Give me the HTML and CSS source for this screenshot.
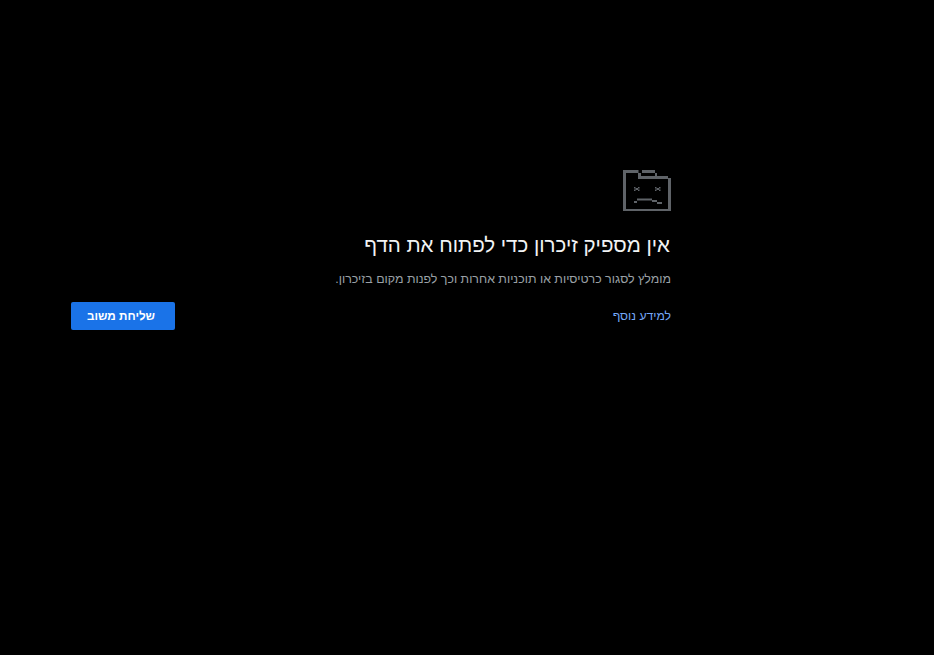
FILE: index.html
```
<!DOCTYPE html>
<html dir="rtl" lang="he">
<head>
<meta charset="utf-8">
<title>אין מספיק זיכרון</title>
<link rel="stylesheet" href="styles.css">
</head>
<body>
<main class="wrapper">
  <svg class="icon" width="48" height="42" viewBox="0 0 48 42" aria-hidden="true">
    <g fill="#5f6368">
      <rect x="0" y="4" width="3" height="38"/>
      <rect x="0" y="1" width="15.5" height="3"/>
      <rect x="15" y="4" width="3" height="6"/>
      <rect x="18" y="7" width="27" height="3"/>
      <rect x="19" y="1" width="13" height="3"/>
      <rect x="32" y="4" width="2" height="3"/>
      <rect x="45" y="9" width="3" height="33"/>
      <rect x="0" y="40" width="48" height="2"/>
      <rect x="11" y="18" width="1.5" height="1.5"/>
      <rect x="15" y="18" width="1.5" height="1.5"/>
      <rect x="12.5" y="19" width="2.5" height="2"/>
      <rect x="11" y="20.5" width="1.5" height="1.5"/>
      <rect x="15" y="20.5" width="1.5" height="1.5"/>
      <rect x="32" y="18" width="1.5" height="1.5"/>
      <rect x="36" y="18" width="1.5" height="1.5"/>
      <rect x="33.5" y="19" width="2.5" height="2"/>
      <rect x="32" y="20.5" width="1.5" height="1.5"/>
      <rect x="36" y="20.5" width="1.5" height="1.5"/>
      <rect x="11" y="32" width="3" height="2"/>
      <rect x="14" y="29.5" width="15" height="2"/>
      <rect x="29" y="31" width="5" height="2"/>
      <rect x="34" y="33" width="5" height="2"/>
    </g>
  </svg>
  <h1 class="title">אין מספיק זיכרון כדי לפתוח את הדף</h1>
  <p class="message">מומלץ לסגור כרטיסיות או תוכניות אחרות וכך לפנות מקום בזיכרון.</p>
  <div class="actions">
    <a class="link" href="#">למידע נוסף</a>
    <button class="send" type="button">שליחת משוב</button>
  </div>
</main>
</body>
</html>
```
FILE: styles.css
```
html, body {
  margin: 0;
  height: 100%;
  background: #000;
}
body {
  font-family: "Liberation Sans", Arial, sans-serif;
  font-size: 13px;
  color: #9aa0a6;
}
.wrapper {
  box-sizing: border-box;
  width: 600px;
  margin-right: 263px;
  padding-top: 169px;
}
.icon {
  display: block;
}
.title {
  margin: 20px 0 0;
  padding-right: 1px;
  font-size: 20.5px;
  line-height: 28px;
  font-weight: 400;
  color: #f1f3f4;
}
.message {
  margin: 10px 0 0;
  font-size: 12.4px;
  line-height: 20px;
}
.actions {
  display: flex;
  justify-content: space-between;
  align-items: center;
  margin-top: 13px;
}
.link {
  font-size: 12.2px;
  color: #74a7f7;
  text-decoration: none;
}
.send {
  box-sizing: border-box;
  width: 104px;
  height: 28px;
  padding: 0 4px 2px 0;
  border: 0;
  border-radius: 2px;
  background: #1a73e8;
  color: #fff;
  font-family: inherit;
  font-size: 11.7px;
  font-weight: 700;
}
```
